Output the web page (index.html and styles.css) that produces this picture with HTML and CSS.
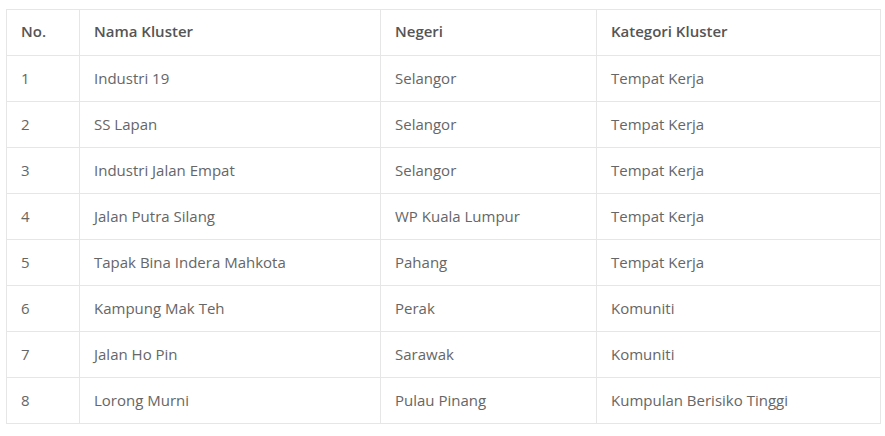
FILE: index.html
```html
<!DOCTYPE html>
<html>
<head>
<meta charset="utf-8">
<link rel="stylesheet" href="styles.css">
</head>
<body>
<table class="tbl">
<thead>
<tr><th class="c1">No.</th><th class="c2">Nama Kluster</th><th class="c3">Negeri</th><th class="c4">Kategori Kluster</th></tr>
</thead>
<tbody>
<tr><td>1</td><td>Industri 19</td><td>Selangor</td><td>Tempat Kerja</td></tr>
<tr><td>2</td><td>SS Lapan</td><td>Selangor</td><td>Tempat Kerja</td></tr>
<tr><td>3</td><td>Industri Jalan Empat</td><td>Selangor</td><td>Tempat Kerja</td></tr>
<tr><td>4</td><td>Jalan Putra Silang</td><td>WP Kuala Lumpur</td><td>Tempat Kerja</td></tr>
<tr><td>5</td><td>Tapak Bina Indera Mahkota</td><td>Pahang</td><td>Tempat Kerja</td></tr>
<tr><td>6</td><td>Kampung Mak Teh</td><td>Perak</td><td>Komuniti</td></tr>
<tr><td>7</td><td>Jalan Ho Pin</td><td>Sarawak</td><td>Komuniti</td></tr>
<tr><td>8</td><td>Lorong Murni</td><td>Pulau Pinang</td><td>Kumpulan Berisiko Tinggi</td></tr>
</tbody>
</table>
</body>
</html>
```
FILE: styles.css
```css
html, body { margin: 0; padding: 0; background: #fff; }
body { padding: 9px 0 0 6px; font-family: "Open Sans", sans-serif; }
.tbl {
  border-collapse: collapse;
  width: 875px;
  table-layout: fixed;
  font-size: 15px;
  color: #666;
}
.tbl th, .tbl td {
  border: 1px solid #e6e6e6;
  height: 46px;
  padding: 0 0 2px 14px;
  text-align: left;
  vertical-align: middle;
  box-sizing: border-box;
}
.tbl th { font-weight: 600; color: #555; padding-bottom: 3px; }
.c1 { width: 73px; }
.c2 { width: 301px; }
.c3 { width: 216px; }
.c4 { width: auto; }
```
